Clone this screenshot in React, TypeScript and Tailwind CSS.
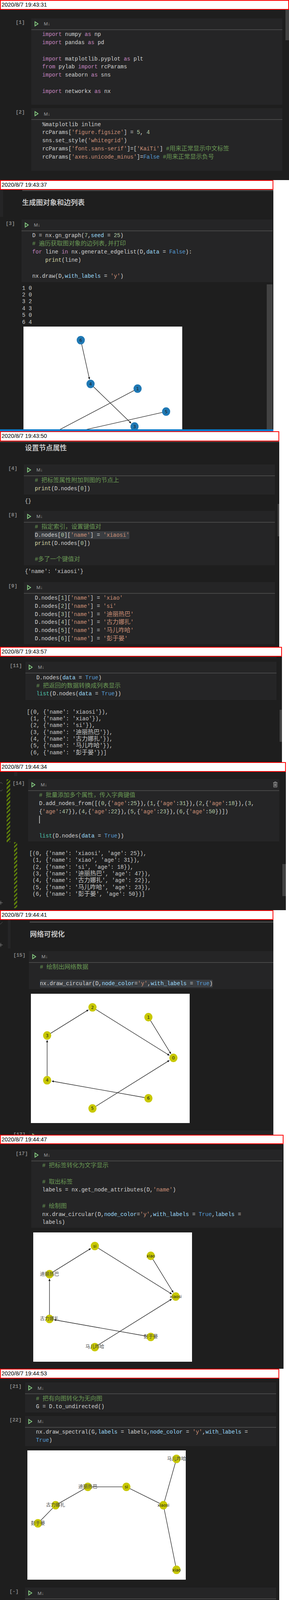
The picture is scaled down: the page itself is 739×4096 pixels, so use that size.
import React from 'react';
import { Check, ChevronDown, ChevronUp, Plus } from 'lucide-react';

type Kids = { children?: React.ReactNode };

// syntax colours
const K = ({ children }: Kids) => <span className="text-[#c586c0]">{children}</span>;
const S = ({ children }: Kids) => <span className="text-[#ce9178]">{children}</span>;
const N = ({ children }: Kids) => <span className="text-[#b5cea8]">{children}</span>;
const C = ({ children }: Kids) => <span className="text-[#6a9955]">{children}</span>;
const V = ({ children }: Kids) => <span className="text-[#9cdcfe]">{children}</span>;
const B = ({ children }: Kids) => <span className="text-[#569cd6]">{children}</span>;
const F = ({ children }: Kids) => <span className="text-[#dcdcaa]">{children}</span>;
const T = ({ children }: Kids) => <span className="text-[#4ec9b0]">{children}</span>;
// chinese runs are a bit larger than the latin mono
const Z = ({ children }: Kids) => <span className="text-[15.3px]">{children}</span>;

const Line = ({ children }: Kids) => (
  <div className="h-[20.75px] leading-[20.75px] whitespace-pre text-[#d4d4d4]">{children}</div>
);

const Out = ({ children }: Kids) => (
  <div className="h-[17.35px] leading-[17.35px] whitespace-pre text-[#cccccc]">{children}</div>
);

const Mark = ({ children }: Kids) => (
  <span className="inline-block h-[20px] rounded-[3px] bg-[#3a3d41]">{children}</span>
);

function Stamp({ time, className }: { time: string; className: string }) {
  return (
    <div
      className={`flex shrink-0 items-center border-2 border-[#ff0000] bg-white pl-[2px] font-['Liberation_Sans',sans-serif] text-[14.4px] leading-[17px] text-black ${className}`}
    >
      {`2020/8/7 ${time}`}
    </div>
  );
}

function RunIcon() {
  return (
    <svg width="11" height="14" viewBox="0 0 11 14" className="shrink-0">
      <path d="M1.5 1.7 L9.3 7 L1.5 12.3 Z" fill="none" stroke="#89d185" strokeWidth="1.9" />
    </svg>
  );
}

function TrashIcon() {
  return (
    <svg width="12" height="15" viewBox="0 0 12 15" fill="none" stroke="#b4b4b4" strokeWidth="1">
      <path d="M4 2 V0.7 H8 V2" />
      <path d="M0.5 2.5 H11.5" />
      <path d="M1.8 2.5 V14 H10.2 V2.5" />
      <path d="M4.2 4.5 V12 M6 4.5 V12 M7.8 4.5 V12" />
    </svg>
  );
}

function Cell({
  n,
  className,
  bodyClass,
  trash,
  children,
}: {
  n: string;
  className?: string;
  bodyClass?: string;
  trash?: boolean;
  children?: React.ReactNode;
}) {
  return (
    <div className={`flex shrink-0 ${className ?? ''}`}>
      <div className="w-[40px] shrink-0 pt-[3px] text-[13px] leading-[16px] font-bold text-[#858585]">[{n}]</div>
      <div className="min-w-0 flex-1 bg-[#252526]">
        <div className="flex h-[28px] items-center pl-[8px]">
          <RunIcon />
          <span className="ml-[13px] font-['Noto_Sans',sans-serif] text-[11.5px] text-[#a0a0a0]">M↓</span>
          {trash && (
            <span className="mr-[4px] ml-auto flex">
              <TrashIcon />
            </span>
          )}
        </div>
        <div className="h-[2px] bg-[#474747]" />
        <div className={`pt-[1.3px] pl-[28px] ${bodyClass ?? ''}`}>{children}</div>
      </div>
    </div>
  );
}

function Heading({ children }: Kids) {
  return (
    <div className="font-['Noto_Sans_CJK_SC',sans-serif] text-[17.8px] leading-[24px] font-bold text-[#c4c4c4]">
      {children}
    </div>
  );
}

type GNode = { x: number; y: number; label: string; size?: number; color?: string };
type GEdge = [number, number];

// drawn in the figure's own pixels, the svg scales it down
function Graph({
  nodes,
  edges,
  fill,
  arrows,
  height,
  className,
}: {
  nodes: GNode[];
  edges: GEdge[];
  fill: string;
  arrows: boolean;
  height: number;
  className: string;
}) {
  const r = 12;
  return (
    <svg viewBox={`0 0 467 ${height}`} className={`block shrink-0 bg-white ${className}`}>
      {edges.map(([a, b], i) => {
        const p = nodes[a];
        const q = nodes[b];
        const d = Math.hypot(q.x - p.x, q.y - p.y);
        const ux = (q.x - p.x) / d;
        const uy = (q.y - p.y) / d;
        const ex = q.x - ux * (arrows ? r + 1 : 0);
        const ey = q.y - uy * (arrows ? r + 1 : 0);
        const bx = ex - (arrows ? ux * 7 : 0);
        const by = ey - (arrows ? uy * 7 : 0);
        return (
          <g key={i}>
            <line x1={p.x} y1={p.y} x2={bx} y2={by} stroke="#222222" strokeWidth="1.5" />
            {arrows && (
              <polygon
                fill="#111111"
                points={`${ex},${ey} ${bx - uy * 3},${by + ux * 3} ${bx + uy * 3},${by - ux * 3}`}
              />
            )}
          </g>
        );
      })}
      {nodes.map((m, i) => (
        <g key={i}>
          <ellipse cx={m.x} cy={m.y} rx={r} ry={r + 0.5} fill={fill} />
          <text
            x={m.x}
            y={m.y + 4.5}
            textAnchor="middle"
            fontSize={m.size ?? 13}
            fill={m.color ?? '#222222'}
            className="font-['DejaVu_Sans','Noto_Sans_CJK_SC',sans-serif]"
          >
            {m.label}
          </text>
        </g>
      ))}
    </svg>
  );
}

const circularPos = [
  { x: 419.6, y: 189 },
  { x: 346, y: 69 },
  { x: 181.3, y: 40 },
  { x: 47.8, y: 123 },
  { x: 47.8, y: 255 },
  { x: 181.3, y: 338 },
  { x: 346, y: 308 },
];
const circularEdges: GEdge[] = [
  [1, 0],
  [2, 0],
  [3, 2],
  [4, 3],
  [5, 0],
  [6, 4],
];
const names = ['xiaosi', 'xiao', 'si', '迪丽热巴', '古力娜扎', '马儿咋哈', '彭于晏'];

// the first figure is cut by the window, its lower nodes lie outside the crop
const gnNodes: GNode[] = [
  { x: 168.7, y: 40, label: '6' },
  { x: 197.5, y: 169, label: '4' },
  { x: 336, y: 183, label: '1' },
  { x: 420, y: 250.6, label: '5' },
  { x: 327, y: 294.7, label: '3' },
  { x: 38, y: 340, label: '' },
  { x: 22.6, y: 340, label: '' },
  { x: 372, y: 340, label: '' },
];

const spectralNodes: GNode[] = [
  { x: 400.5, y: 161.6, label: 'xiaosi', size: 12 },
  { x: 439, y: 352, label: 'xiao', size: 12 },
  { x: 291.5, y: 107.5, label: 'si' },
  { x: 178, y: 107.5, label: '迪丽热巴', size: 14, color: '#444444' },
  { x: 83, y: 161.6, label: '古力娜扎', size: 14, color: '#444444' },
  { x: 439, y: 25, label: '马儿咋哈', size: 14, color: '#444444' },
  { x: 31, y: 215, label: '彭于晏', size: 14, color: '#444444' },
];

const Bar = ({ className }: { className: string }) => (
  <div className={`absolute bg-[#424242] ${className}`} />
);

const Stripes = ({ className }: { className: string }) => (
  <div
    className={`absolute bg-[repeating-linear-gradient(135deg,#5e7f0a_0,#5e7f0a_3.7px,transparent_3.7px,transparent_7.4px)] ${className}`}
  />
);

export default function App() {
  return (
    <div className="w-[739px] bg-white font-['Liberation_Mono','Noto_Sans_CJK_SC',monospace] text-[13.9px] text-[#d4d4d4]">
      {/* 19:43:31 imports */}
      <section className="relative flex h-[461px] flex-col overflow-hidden bg-[#1e1e1e]">
        <Stamp time="19:43:31" className="h-[25px] w-full" />
        <Bar className="top-[25px] left-[729.5px] h-[78px] w-[9.5px]" />
        <Cell n="1" className="mt-[22px] ml-[40px] w-[682px]" bodyClass="pb-[24px]">
          <Line><K>import</K> numpy <K>as</K> np</Line>
          <Line><K>import</K> pandas <K>as</K> pd</Line>
          <Line />
          <Line><K>import</K> matplotlib.pyplot <K>as</K> plt</Line>
          <Line><K>from</K> pylab <K>import</K> rcParams</Line>
          <Line><K>import</K> seaborn <K>as</K> sns</Line>
          <Line />
          <Line><K>import</K> networkx <K>as</K> nx</Line>
        </Cell>
        <Cell n="2" className="mt-[9px] ml-[40px] w-[682px]" bodyClass="pb-[25px]">
          <Line>%matplotlib inline</Line>
          <Line>rcParams[<S>'figure.figsize'</S>] = <N>5</N>, <N>4</N></Line>
          <Line>sns.set_style(<S>'whitegrid'</S>)</Line>
          <Line>rcParams[<S>'font.sans-serif'</S>]=[<S>'KaiTi'</S>] <C>#<Z>用来正常显示中文标签</Z></C></Line>
          <Line>rcParams[<S>'axes.unicode_minus'</S>]=<B>False</B> <C>#<Z>用来正常显示负号</Z></C></Line>
        </Cell>
      </section>

      {/* 19:43:37 graph */}
      <section className="relative h-[643px] overflow-hidden bg-white">
        <div className="flex h-full w-[699px] flex-col bg-[#1e1e1e]">
          <Stamp time="19:43:37" className="h-[24.5px] w-full" />
          <div className="flex h-[69.5px] shrink-0">
            <div className="w-[8px] bg-[#252526]" />
            <div className="ml-[48.5px] flex-1">
              <div className="h-[3px] bg-[#474747]" />
              <div className="mt-[16px]">
                <Heading>生成图对象和边列表</Heading>
              </div>
            </div>
          </div>
          <Cell n="3" className="mt-[7px] ml-[14.5px] w-[682px]" bodyClass="pb-[4px]">
            <Line>D = nx.gn_graph(<N>7</N>,<V>seed</V> = <N>25</N>)</Line>
            <Line><C># <Z>遍历获取图对象的边列表</Z>,<Z>并打印</Z></C></Line>
            <Line><K>for</K> line <K>in</K> nx.generate_edgelist(D,<V>data</V> = <B>False</B>):</Line>
            <Line>    <F>print</F>(line)</Line>
            <Line />
            <Line>nx.draw(D,<V>with_labels</V> = <S>'y'</S>)</Line>
          </Cell>
          <div className="mt-[8px] ml-[56.5px] shrink-0">
            <Out>1 0</Out>
            <Out>2 0</Out>
            <Out>3 2</Out>
            <Out>4 3</Out>
            <Out>5 0</Out>
            <Out>6 4</Out>
          </div>
          <div className="mt-[2.6px] ml-[60px] min-h-0 flex-1 overflow-hidden">
            <Graph
              nodes={gnNodes}
              edges={[[0, 1], [1, 4], [2, 5], [3, 6], [4, 7]]}
              fill="#1f78b4"
              arrows
              height={340}
              className="w-[405.6px]"
            />
          </div>
          <div className="h-[5.5px] shrink-0 bg-[#007acc]" />
        </div>
        <Bar className="top-[267px] bottom-[5.5px] left-[682px] w-[14.5px]" />
      </section>

      {/* 19:43:50 node attributes */}
      <section className="relative h-[552px] overflow-hidden bg-white">
        <div className="flex h-full w-[714px] flex-col bg-[#1e1e1e]">
          <Stamp time="19:43:50" className="h-[25.5px] w-full" />
          <div className="h-[2px] shrink-0 bg-[#474747]" />
          <div className="mt-[1px] ml-[64px] h-[56.5px] shrink-0">
            <Heading>设置节点属性</Heading>
          </div>
          <Cell n="4" className="ml-[21px] w-[682px]" bodyClass="pb-[4.5px]">
            <Line><C># <Z>把标签属性附加到图的节点上</Z></C></Line>
            <Line><F>print</F>(D.nodes[<N>0</N>])</Line>
          </Cell>
          <div className="mt-[8.7px] ml-[63.4px] shrink-0">
            <Out>{'{}'}</Out>
          </div>
          <Cell n="8" className="mt-[15.6px] ml-[21px] w-[682px]" bodyClass="pb-[4px]">
            <Line><C># <Z>指定索引，设置键值对</Z></C></Line>
            <Line><Mark>D.nodes[<N>0</N>][<S>'name'</S>] = <S>'xiaosi'</S></Mark></Line>
            <Line><F>print</F>(D.nodes[<N>0</N>])</Line>
            <Line />
            <Line><C>#<Z>多了一个键值对</Z></C></Line>
          </Cell>
          <div className="mt-[8px] ml-[63.4px] shrink-0">
            <Out>{"{'name': 'xiaosi'}"}</Out>
          </div>
          <Cell n="9" className="mt-[17.4px] ml-[21px] w-[682px]" bodyClass="pb-[3px]">
            <Line>D.nodes[<N>1</N>][<S>'name'</S>] = <S>'xiao'</S></Line>
            <Line>D.nodes[<N>2</N>][<S>'name'</S>] = <S>'si'</S></Line>
            <Line>D.nodes[<N>3</N>][<S>'name'</S>] = <S>'<Z>迪丽热巴</Z>'</S></Line>
            <Line>D.nodes[<N>4</N>][<S>'name'</S>] = <S>'<Z>古力娜扎</Z>'</S></Line>
            <Line>D.nodes[<N>5</N>][<S>'name'</S>] = <S>'<Z>马儿咋哈</Z>'</S></Line>
            <Line>D.nodes[<N>6</N>][<S>'name'</S>] = <S>'<Z>彭于晏</Z>'</S></Line>
          </Cell>
        </div>
        <Bar className="top-[186px] left-[710px] h-[82.5px] w-[4px]" />
      </section>

      {/* 19:43:57 nodes list */}
      <section className="relative h-[295px] overflow-hidden bg-white">
        <div className="flex h-full w-[721px] flex-col bg-[#1e1e1e]">
          <Stamp time="19:43:57" className="h-[24.5px] w-full" />
          <div className="ml-[65px] h-[4px] w-[642px] shrink-0 bg-[#252526]" />
          <Cell n="11" className="mt-[9px] ml-[25px] w-[682px]" bodyClass="pb-[4.5px]">
            <Line>D.nodes(<V>data</V> = <B>True</B>)</Line>
            <Line><C># <Z>把返回的数据转换成列表显示</Z></C></Line>
            <Line><T>list</T>(D.nodes(<V>data</V> = <B>True</B>))</Line>
          </Cell>
          <div className="mt-[23px] ml-[68.6px] shrink-0">
            <Out>{"[(0, {'name': 'xiaosi'}),"}</Out>
            <Out>{" (1, {'name': 'xiao'}),"}</Out>
            <Out>{" (2, {'name': 'si'}),"}</Out>
            <Out>{" (3, {'name': '"}<Z>迪丽热巴</Z>{"'}),"}</Out>
            <Out>{" (4, {'name': '"}<Z>古力娜扎</Z>{"'}),"}</Out>
            <Out>{" (5, {'name': '"}<Z>马儿咋哈</Z>{"'}),"}</Out>
            <Out>{" (6, {'name': '"}<Z>彭于晏</Z>{"'})]"}</Out>
          </div>
        </div>
        <Bar className="top-[160.7px] left-[715px] h-[82.5px] w-[6px]" />
      </section>

      {/* 19:44:34 ages, focused cell */}
      <section className="relative h-[379px] overflow-hidden bg-white">
        <div className="flex h-full w-[730.5px] flex-col bg-[#1e1e1e]">
          <Stamp time="19:44:34" className="h-[24.5px] w-full" />
          <div className="ml-[36px] h-[11px] w-[7.5px] shrink-0 bg-[#252526]" />
          <Cell n="14" trash className="mt-[8.4px] ml-[32px] w-[682px]" bodyClass="pb-[3px]">
            <Line><C># <Z>批量添加多个属性，传入字典键值</Z></C></Line>
            <Line>
              D.add_nodes_from([(<N>0</N>,{'{'}<S>'age'</S>:<N>25</N>{'}'}),(<N>1</N>,{'{'}<S>'age'</S>:<N>31</N>{'}'}),(<N>2</N>,{'{'}<S>'age'</S>:<N>18</N>{'}'}),(<N>3</N>,
            </Line>
            <Line>
              {'{'}<S>'age'</S>:<N>47</N>{'}'}),(<N>4</N>,{'{'}<S>'age'</S>:<N>22</N>{'}'}),(<N>5</N>,{'{'}<S>'age'</S>:<N>23</N>{'}'}),(<N>6</N>,{'{'}<S>'age'</S>:<N>50</N>{'}'})])
            </Line>
            <Line>
              <span className="inline-block h-[20px] w-[1.5px] bg-[#aeafad] align-top" />
            </Line>
            <Line />
            <Line><T>list</T>(D.nodes(<V>data</V> = <B>True</B>))</Line>
          </Cell>
          <div className="mt-[23.4px] ml-[74.7px] shrink-0">
            <Out>{"[(0, {'name': 'xiaosi', 'age': 25}),"}</Out>
            <Out>{" (1, {'name': 'xiao', 'age': 31}),"}</Out>
            <Out>{" (2, {'name': 'si', 'age': 18}),"}</Out>
            <Out>{" (3, {'name': '"}<Z>迪丽热巴</Z>{"', 'age': 47}),"}</Out>
            <Out>{" (4, {'name': '"}<Z>古力娜扎</Z>{"', 'age': 22}),"}</Out>
            <Out>{" (5, {'name': '"}<Z>马儿咋哈</Z>{"', 'age': 23}),"}</Out>
            <Out>{" (6, {'name': '"}<Z>彭于晏</Z>{"', 'age': 50})]"}</Out>
          </div>
        </div>
        <Stripes className="top-[44px] left-[17.4px] h-[161px] w-[8.7px]" />
        <Stripes className="top-[205px] left-[35.6px] h-[168.5px] w-[8px]" />
        <ChevronUp className="absolute top-[46px] left-[-5px] h-[15px] w-[15px] text-[#a0a0a0]" strokeWidth={1} />
        <ChevronDown className="absolute top-[65px] left-[-5px] h-[15px] w-[15px] text-[#a0a0a0]" strokeWidth={1} />
        <Plus className="absolute top-[352px] left-[-6px] h-[16px] w-[16px] text-[#c0c0c0]" strokeWidth={1} />
        <Bar className="top-[261.4px] left-[722px] h-[82px] w-[8.5px]" />
      </section>

      {/* 19:44:41 circular */}
      <section className="relative h-[575px] overflow-hidden bg-white">
        <div className="flex h-full w-[699px] flex-col bg-[#1e1e1e]">
          <Stamp time="19:44:41" className="h-[24.7px] w-full" />
          <div className="flex h-[73.4px] shrink-0">
            <div className="ml-[20px] w-[7px] bg-[#252526]" />
            <div className="ml-[48.6px] flex-1">
              <div className="mt-[4.5px] h-[3px] bg-[#474747]" />
              <div className="mt-[15.5px] ml-[1px]">
                <Heading>网络可视化</Heading>
              </div>
            </div>
          </div>
          <Cell n="15" className="mt-[7px] ml-[34px] flex-none" bodyClass="pb-[3.7px]">
            <Line><C># <Z>绘制出网络数据</Z></C></Line>
            <Line />
            <Line>
              <Mark>nx.draw_circular(D,<V>node_color</V>=<S>'y'</S>,<V>with_labels</V> = <B>True</B>)</Mark>
            </Line>
          </Cell>
          <div className="mt-[11.3px] ml-[79px] shrink-0">
            <Graph
              nodes={circularPos.map((p, i) => ({ ...p, label: String(i) }))}
              edges={circularEdges}
              fill="#c8c800"
              arrows
              height={382}
              className="w-[405.6px]"
            />
          </div>
          <Cell n="17" className="mt-[19px] ml-[34px]" />
        </div>
        <Check className="absolute top-[28px] left-[-3px] h-[11px] w-[11px] text-[#a0a0a0]" strokeWidth={1} />
        <Plus className="absolute top-[81px] left-[-6px] h-[16px] w-[16px] text-[#c0c0c0]" strokeWidth={1} />
      </section>

      {/* 19:44:47 labels */}
      <section className="relative h-[599px] overflow-hidden bg-white">
        <div className="flex h-full w-[725px] flex-col bg-[#1e1e1e]">
          <Stamp time="19:44:47" className="h-[24px] w-full" />
          <Cell n="17" className="mt-[13.8px] ml-[40px] w-[682px]" bodyClass="pb-[3.3px]">
            <Line><C># <Z>把标签转化为文字显示</Z></C></Line>
            <Line />
            <Line><C># <Z>取出标签</Z></C></Line>
            <Line>labels = nx.get_node_attributes(D,<S>'name'</S>)</Line>
            <Line />
            <Line><C># <Z>绘制图</Z></C></Line>
            <Line>nx.draw_circular(D,<V>node_color</V>=<S>'y'</S>,<V>with_labels</V> = <B>True</B>,<V>labels</V> =</Line>
            <Line>labels)</Line>
          </Cell>
          <div className="mt-[11.3px] ml-[85px] shrink-0">
            <Graph
              nodes={circularPos.map((p, i) => ({
                ...p,
                label: names[i],
                size: i < 3 ? 12 : 14,
                color: i < 3 ? '#222222' : '#444444',
              }))}
              edges={circularEdges}
              fill="#c8c800"
              arrows
              height={381}
              className="w-[405.6px]"
            />
          </div>
        </div>
      </section>

      {/* 19:44:53 undirected */}
      <section className="relative h-[592px] overflow-hidden bg-white">
        <div className="flex h-full w-[714px] flex-col bg-[#1e1e1e]">
          <Stamp time="19:44:53" className="h-[24.5px] w-full" />
          <div className="ml-[26px] h-[4px] w-[9px] shrink-0 bg-[#252526]" />
          <Cell n="21" className="mt-[6.8px] ml-[24px] w-[682px]" bodyClass="pb-[4px]">
            <Line><C># <Z>把有向图转化为无向图</Z></C></Line>
            <Line>G = D.to_undirected()</Line>
          </Cell>
          <Cell n="22" className="mt-[8.7px] ml-[24px] w-[682px]" bodyClass="pb-[4px]">
            <Line>nx.draw_spectral(G,<V>labels</V> = labels,<V>node_color</V> = <S>'y'</S>,<V>with_labels</V> =</Line>
            <Line><B>True</B>)</Line>
          </Cell>
          <div className="mt-[11.7px] ml-[69.5px] shrink-0">
            <Graph
              nodes={spectralNodes}
              edges={[[5, 0], [2, 0], [3, 2], [4, 3], [6, 4], [1, 0]]}
              fill="#c8c800"
              arrows={false}
              height={381}
              className="w-[405.6px]"
            />
          </div>
          <Cell n="-" className="mt-[20px] ml-[24px] w-[682px]" />
        </div>
      </section>
    </div>
  );
}
